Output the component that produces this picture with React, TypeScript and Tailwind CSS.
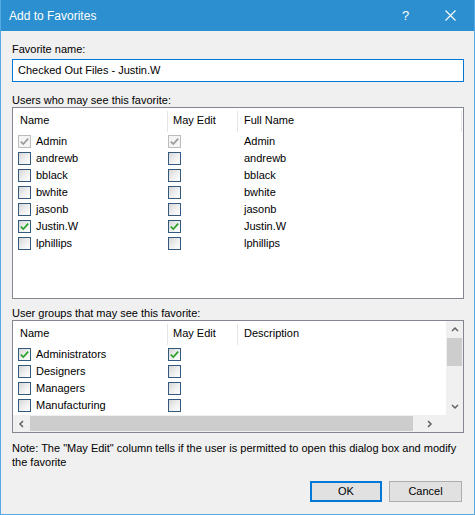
import React from "react";

type CheckState = "disabled" | "checked" | "unchecked";

function CheckBox({ state }: { state: CheckState }) {
  const disabled = state === "disabled";
  return (
    <div
      className={
        disabled
          ? "w-[13px] h-[13px] shrink-0 border border-[#bcbcbc] bg-[#f4f4f4] flex items-center justify-center"
          : "w-[13px] h-[13px] shrink-0 border border-[#33597f] bg-gradient-to-br from-[#d6d6d6] via-[#eeeeee] to-white flex items-center justify-center"
      }
    >
      {state !== "unchecked" && (
        <svg width="11" height="11" viewBox="0 0 11 11">
          <path
            d="M1.8 5.6 L4.3 8.1 L9.2 2.6"
            fill="none"
            stroke={disabled ? "#9a9a9a" : "#27a127"}
            strokeWidth="1.6"
          />
        </svg>
      )}
    </div>
  );
}

function Chevron({ dir }: { dir: "up" | "down" | "left" | "right" }) {
  const d = {
    up: "M1 5 L4 2 L7 5",
    down: "M1 2 L4 5 L7 2",
    left: "M5 1 L2 4 L5 7",
    right: "M2 1 L5 4 L2 7",
  }[dir];
  const w = dir === "up" || dir === "down" ? 8 : 7;
  const h = dir === "up" || dir === "down" ? 7 : 8;
  return (
    <svg width={w} height={h} viewBox={`0 0 ${w} ${h}`}>
      <path d={d} fill="none" stroke="#606060" strokeWidth="1.5" />
    </svg>
  );
}

const users: [string, CheckState, CheckState][] = [
  ["Admin", "disabled", "disabled"],
  ["andrewb", "unchecked", "unchecked"],
  ["bblack", "unchecked", "unchecked"],
  ["bwhite", "unchecked", "unchecked"],
  ["jasonb", "unchecked", "unchecked"],
  ["Justin.W", "checked", "checked"],
  ["lphillips", "unchecked", "unchecked"],
];

const groups: [string, CheckState, CheckState][] = [
  ["Administrators", "checked", "checked"],
  ["Designers", "unchecked", "unchecked"],
  ["Managers", "unchecked", "unchecked"],
  ["Manufacturing", "unchecked", "unchecked"],
  ["", "unchecked", "unchecked"],
];

function HeaderCell({ label, width, pl, sep = true }: { label: string; width: string; pl: string; sep?: boolean }) {
  return (
    <div className={`flex shrink-0 ${width}`}>
      <div className={`flex-1 flex items-center ${pl}`}>{label}</div>
      {sep && <div className="w-px bg-[#e5e5e5] my-[3px] mb-px" />}
    </div>
  );
}

export default function App() {
  return (
    <div className="w-[475px] h-[515px] bg-[#f0f0f0] border-x border-b border-[#55aae6] flex flex-col font-['Liberation_Sans',Arial,sans-serif] text-[11px] text-black overflow-hidden">
      {/* title bar */}
      <div className="h-[31px] shrink-0 bg-[#2b8fd0] -mx-px flex items-center text-white">
        <div className="pl-[9px] text-[12px] flex-1">Add to Favorites</div>
        <div className="text-[13px] w-[10px] mr-[33px]">?</div>
        <svg width="11" height="11" viewBox="0 0 11 11" className="mr-[19px]">
          <path d="M0.5 0.5 L10.5 10.5 M10.5 0.5 L0.5 10.5" stroke="white" strokeWidth="1.1" />
        </svg>
      </div>

      <div className="flex flex-col pl-[11px]">
        <div className="mt-[11px] h-[14px] leading-[14px]">Favorite name:</div>
        <div className="mt-[3px] w-[452px] h-[23px] border border-[#0078d7] bg-white flex items-center pl-[5px]">
          Checked Out Files - Justin.W
        </div>

        <div className="mt-[11px] h-[14px] leading-[14px]">Users who may see this favorite:</div>
        <div className="w-[452px] h-[192px] border border-[#828790] bg-white flex flex-col">
          <div className="h-[25px] flex shrink-0">
            <HeaderCell label="Name" width="w-[155px]" pl="pl-[7px]" />
            <HeaderCell label="May Edit" width="w-[70px]" pl="pl-[5px]" />
            <HeaderCell label="Full Name" width="w-[224px]" pl="pl-[6px]" />
          </div>
          {users.map(([name, a, b]) => (
            <div key={name} className="h-[17px] flex items-center shrink-0">
              <div className="w-[155px] flex items-center gap-[5px] pl-[5px]">
                <CheckBox state={a} />
                <span>{name}</span>
              </div>
              <div className="w-[70px] flex items-center">
                <CheckBox state={b} />
              </div>
              <div className="pl-[6px]">{name}</div>
            </div>
          ))}
        </div>

        <div className="mt-[7px] h-[14px] leading-[14px]">User groups that may see this favorite:</div>
        <div className="w-[452px] h-[113px] border border-[#828790] bg-white flex flex-col">
          <div className="flex h-[94px]">
            <div className="flex-1 flex flex-col overflow-hidden">
              <div className="h-[25px] flex shrink-0">
                <HeaderCell label="Name" width="w-[155px]" pl="pl-[7px]" />
                <HeaderCell label="May Edit" width="w-[70px]" pl="pl-[5px]" />
                <HeaderCell label="Description" width="w-[208px]" pl="pl-[6px]" sep={false} />
              </div>
              {groups.map(([name, a, b], i) => (
                <div key={i} className="h-[17px] flex items-center shrink-0">
                  <div className="w-[155px] flex items-center gap-[5px] pl-[5px]">
                    <CheckBox state={a} />
                    <span>{name}</span>
                  </div>
                  <div className="w-[70px] flex items-center">
                    <CheckBox state={b} />
                  </div>
                </div>
              ))}
            </div>
            {/* vertical scrollbar */}
            <div className="w-[17px] bg-[#f0f0f0] flex flex-col items-center">
              <div className="h-[17px] flex items-center justify-center">
                <Chevron dir="up" />
              </div>
              <div className="w-[15px] h-[28px] bg-[#cdcdcd]" />
              <div className="flex-1" />
              <div className="h-[17px] flex items-center justify-center">
                <Chevron dir="down" />
              </div>
            </div>
          </div>
          {/* horizontal scrollbar */}
          <div className="h-[17px] flex">
            <div className="flex-1 bg-[#f0f0f0] flex items-center">
              <div className="w-[17px] flex justify-center">
                <Chevron dir="left" />
              </div>
              <div className="w-[383px] h-[15px] bg-[#cdcdcd]" />
              <div className="flex-1 flex justify-center">
                <Chevron dir="right" />
              </div>
            </div>
            <div className="w-[17px] bg-[#f0f0f0]" />
          </div>
        </div>

        <div className="mt-[8px] w-[452px] leading-[14px]">
          Note: The "May Edit" column tells if the user is permitted to open this dialog box and modify the favorite
        </div>

        <div className="mt-[12px] w-[450px] flex justify-end gap-[7px]">
          <button className="w-[72px] h-[21px] border-2 border-[#0078d7] bg-[#e1e1e1] flex items-center justify-center">
            OK
          </button>
          <button className="w-[73px] h-[21px] border border-[#adadad] bg-[#e1e1e1] flex items-center justify-center">
            Cancel
          </button>
        </div>
      </div>
    </div>
  );
}
